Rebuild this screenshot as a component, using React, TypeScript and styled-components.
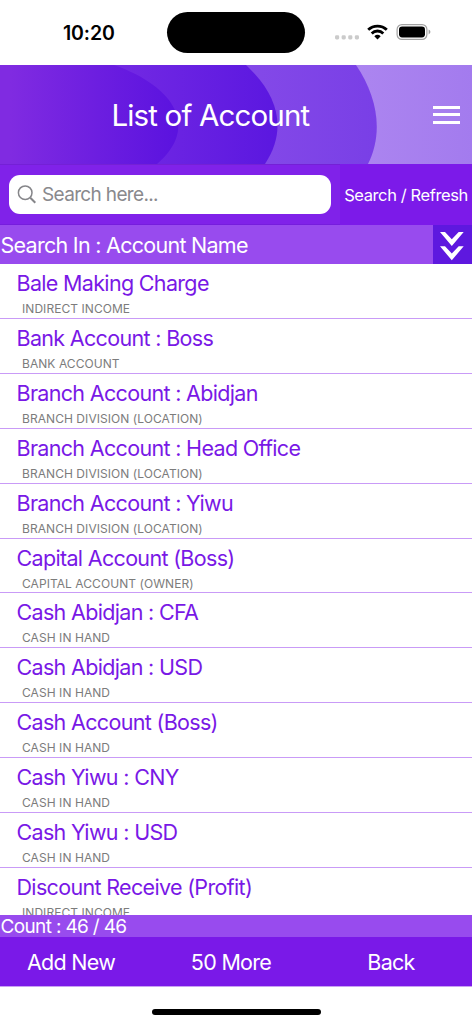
import React from "react";
import styled, { createGlobalStyle } from "styled-components";

const GlobalStyle = createGlobalStyle`
  *, *::before, *::after { box-sizing: border-box; }
  body { margin: 0; background: #fff; }
  button, input { font: inherit; border: 0; background: none; padding: 0; color: inherit; }
`;

const Screen = styled.div`
  width: 472px;
  height: 1024px;
  display: flex;
  flex-direction: column;
  overflow: hidden;
  background: #fff;
  color: #fff;
  font-family: Inter, "Liberation Sans", sans-serif;
  font-weight: 400;
  white-space: nowrap;
`;

const StatusBar = styled.div`
  flex: none;
  height: 65px;
  display: grid;
  grid-template-columns: 167px 138px 1fr;
  align-items: start;
  color: #000;
`;

const Clock = styled.span`
  padding: 20px 0 0 63px;
  font-size: 19.5px;
  line-height: 26px;
  font-weight: 600;
  letter-spacing: -0.15px;
`;

const Island = styled.div`
  height: 41px;
  margin-top: 12px;
  border-radius: 21px;
  background: #000;
`;

const StatusIcons = styled.svg`
  display: block;
  width: 110px;
  height: 24px;
  margin: 20px 0 0 24px;
`;

const Header = styled.header`
  flex: none;
  height: 99px;
  display: grid;
  > * { grid-area: 1 / 1; }
`;

const HeaderArt = styled.svg`
  display: block;
  width: 472px;
  height: 99px;
`;

const HeaderBar = styled.div`
  display: flex;
  align-items: center;
  justify-content: space-between;
  padding: 0 12px 0 111.5px;
  z-index: 1;
`;

const Title = styled.h1`
  margin: 0;
  font-size: 29.5px;
  line-height: 40px;
  font-weight: 400;
  letter-spacing: -0.85px;
`;

const MenuButton = styled.button`
  width: 27px;
  height: 18px;
  display: flex;
  flex-direction: column;
  justify-content: space-between;
  span { height: 3px; background: #fff; }
`;

const SearchRow = styled.div`
  flex: none;
  height: 61px;
  display: flex;
  background: #7c1ae9;
`;

const SearchArea = styled.div`
  width: 340px;
  padding: 11px 9px;
  background: #8022e9;
  border-top: 1px solid #7420d6;
  border-bottom: 1px solid #761ddd;
`;

const SearchField = styled.label`
  display: flex;
  align-items: center;
  gap: 6px;
  height: 39px;
  margin-top: -1px;
  padding-left: 8px;
  border-radius: 11px;
  background: #fff;
  color: #89898d;
  font-size: 19px;
  letter-spacing: -0.65px;
  svg { flex: none; }
  input { width: 250px; outline: 0; letter-spacing: inherit; }
  input::placeholder { color: #89898d; opacity: 1; }
`;

const RefreshButton = styled.button`
  flex: 1;
  padding-top: 1px;
  text-align: center;
  font-size: 16.5px;
  letter-spacing: -0.4px;
`;

const FilterRow = styled.div`
  flex: none;
  height: 39px;
  display: flex;
  justify-content: space-between;
  padding-left: 0.5px;
  background: #984bee;
  font-size: 21.5px;
  line-height: 40px;
  letter-spacing: -0.72px;
`;

const ExpandButton = styled.button`
  width: 39px;
  height: 39px;
  background: #5e18df;
  svg { display: block; }
`;

const List = styled.ul`
  flex: none;
  height: 651px;
  margin: 0;
  padding: 0.15px 0 0;
  list-style: none;
  overflow: hidden;
`;

const Row = styled.li`
  height: 54.9px;
  padding: 4px 0 0 16.5px;
  border-bottom: 1px solid #c99bf7;
`;

const AccountName = styled.div`
  color: #7918e6;
  font-size: 21.5px;
  line-height: 30px;
  letter-spacing: -0.67px;
`;

const AccountGroup = styled.div`
  padding: 3px 0 0 5.5px;
  color: #7c7c7c;
  font-size: 12px;
  line-height: 15px;
  letter-spacing: 0.06px;
`;

const CountBar = styled.div`
  flex: none;
  height: 22px;
  padding-left: 0.5px;
  background: #984bee;
  font-size: 19px;
  line-height: 23px;
  letter-spacing: -0.65px;
`;

const Footer = styled.nav`
  flex: none;
  height: 50px;
  display: grid;
  grid-template-columns: 142px 178px 142px;
  background: #7a19e8;
  border-bottom: 1px solid #c9a0f4;
`;

const FooterButton = styled.button`
  font-size: 21.5px;
  letter-spacing: -0.7px;
`;

const HomeIndicator = styled.div`
  width: 169px;
  height: 6px;
  margin: 22px auto 0;
  border-radius: 3px;
  background: #000;
`;

const accounts: { name: string; group: string }[] = [
  { name: "Bale Making Charge", group: "INDIRECT INCOME" },
  { name: "Bank Account : Boss", group: "BANK ACCOUNT" },
  { name: "Branch Account : Abidjan", group: "BRANCH DIVISION (LOCATION)" },
  { name: "Branch Account : Head Office", group: "BRANCH DIVISION (LOCATION)" },
  { name: "Branch Account : Yiwu", group: "BRANCH DIVISION (LOCATION)" },
  { name: "Capital Account (Boss)", group: "CAPITAL ACCOUNT (OWNER)" },
  { name: "Cash Abidjan : CFA", group: "CASH IN HAND" },
  { name: "Cash Abidjan : USD", group: "CASH IN HAND" },
  { name: "Cash Account (Boss)", group: "CASH IN HAND" },
  { name: "Cash Yiwu : CNY", group: "CASH IN HAND" },
  { name: "Cash Yiwu : USD", group: "CASH IN HAND" },
  { name: "Discount Receive (Profit)", group: "INDIRECT INCOME" },
];

const waves = [
  { id: "w4", from: "#ac85f0", to: "#a37bee", x1: 356, x2: 472, d: "M0 0H472V99H0Z" },
  { id: "w3", from: "#8449e8", to: "#793fe6", x1: 250, x2: 377, d: "M0 0H356C377 31 384 67 368 99H0Z" },
  { id: "w2", from: "#7229e3", to: "#5b17e0", x1: 120, x2: 277, d: "M0 0H246C278 30 288 64 265 99H0Z" },
  { id: "w1", from: "#802be1", to: "#5a12df", x1: 10, x2: 180, d: "M0 0H114C176 22 199 63 157 99H0Z" },
];

export default function App() {
  return (
    <>
      <GlobalStyle />
      <Screen>
        <StatusBar>
          <Clock>10:20</Clock>
          <Island />
          <StatusIcons viewBox="329 20 110 24">
            <g fill="#cbcbcb">
              <rect x="335" y="35.3" width="4.2" height="4.2" rx="1.4" />
              <rect x="341.6" y="35.3" width="4.2" height="4.2" rx="1.4" />
              <rect x="348.2" y="35.3" width="4.2" height="4.2" rx="1.4" />
              <rect x="354.8" y="35.3" width="4.2" height="4.2" rx="1.4" />
            </g>
            <g fill="none" stroke="#000" strokeWidth="2.8">
              <path d="M368.2 29.8a13.4 13.4 0 0 1 18.6 0" />
              <path d="M371.7 33.4a8.2 8.2 0 0 1 11.6 0" />
            </g>
            <path d="M374.3 36.2a4.7 4.7 0 0 1 6.4 0l-3.2 3.2z" fill="#000" />
            <rect x="397.1" y="24.6" width="29.8" height="14.8" rx="4.8" fill="none" stroke="#a2a2a2" strokeWidth="1.2" />
            <rect x="399" y="26.6" width="26" height="10.8" rx="3.1" fill="#000" />
            <path d="M428.6 29.6c2.4 1 2.4 3.8 0 4.8z" fill="#a2a2a2" />
          </StatusIcons>
        </StatusBar>

        <Header>
          <HeaderArt viewBox="0 0 472 99">
            <defs>
              {waves.map((w) => (
                <linearGradient key={w.id} id={w.id} gradientUnits="userSpaceOnUse" x1={w.x1} x2={w.x2} y1="0" y2="0">
                  <stop stopColor={w.from} />
                  <stop offset="1" stopColor={w.to} />
                </linearGradient>
              ))}
            </defs>
            {waves.map((w) => (
              <path key={w.id} d={w.d} fill={`url(#${w.id})`} />
            ))}
          </HeaderArt>
          <HeaderBar>
            <Title>List of Account</Title>
            <MenuButton aria-label="Menu">
              <span />
              <span />
              <span />
            </MenuButton>
          </HeaderBar>
        </Header>

        <SearchRow>
          <SearchArea>
            <SearchField>
              <svg width="19" height="19" viewBox="0 0 19 19" fill="none" stroke="#858589">
                <circle cx="8.2" cy="7.7" r="6.8" strokeWidth="1.5" />
                <path d="M13.3 12.8l5 5" strokeWidth="2" />
              </svg>
              <input placeholder="Search here..." />
            </SearchField>
          </SearchArea>
          <RefreshButton>Search / Refresh</RefreshButton>
        </SearchRow>

        <FilterRow>
          <span>Search In : Account Name</span>
          <ExpandButton aria-label="Expand">
            <svg width="39" height="39" viewBox="0 0 39 39" fill="#fff">
              <path d="M7 7h5l6.800 7.200L25.700 7h5L18.800 21z" />
              <path d="M7 21.300h5l6.800 7.200 6.900-7.200h5L18.800 35.300z" />
            </svg>
          </ExpandButton>
        </FilterRow>

        <List>
          {accounts.map((a) => (
            <Row key={a.name}>
              <AccountName>{a.name}</AccountName>
              <AccountGroup>{a.group}</AccountGroup>
            </Row>
          ))}
        </List>

        <CountBar>Count : 46 / 46</CountBar>
        <Footer>
          <FooterButton>Add New</FooterButton>
          <FooterButton>50 More</FooterButton>
          <FooterButton>Back</FooterButton>
        </Footer>
        <HomeIndicator />
      </Screen>
    </>
  );
}
